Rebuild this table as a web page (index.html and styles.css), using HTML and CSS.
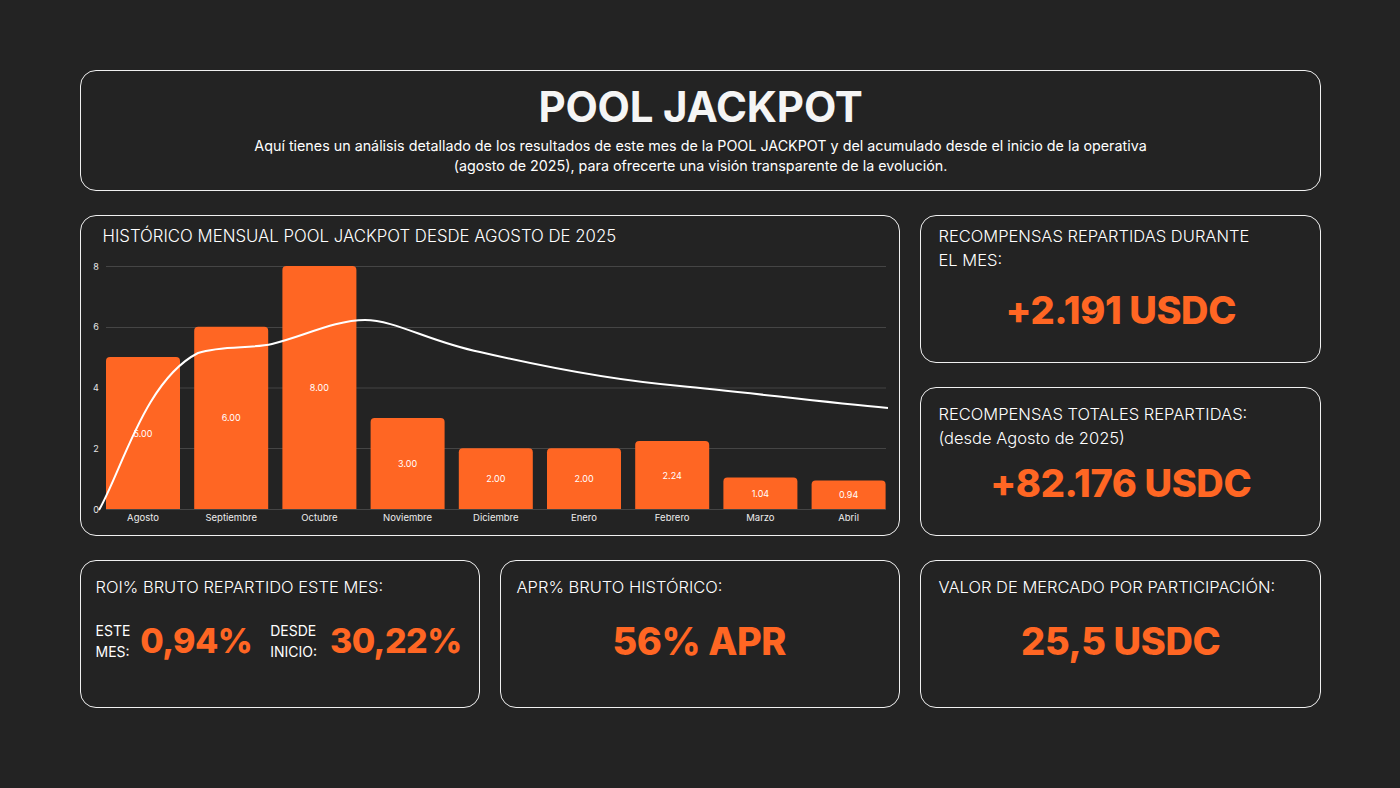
FILE: index.html
```html
<!DOCTYPE html>
<html lang="es">
<head>
<meta charset="utf-8">
<title>POOL JACKPOT</title>
<link rel="stylesheet" href="styles.css">
</head>
<body>
<main class="page">
  <header class="card header">
    <h1 class="header-title">POOL JACKPOT</h1>
    <p class="header-sub">Aquí tienes un análisis detallado de los resultados de este mes de la POOL JACKPOT y del acumulado desde el inicio de la operativa<br>(agosto de 2025), para ofrecerte una visión transparente de la evolución.</p>
  </header>

  <section class="card chart-card">
    <h2 class="chart-title">HISTÓRICO MENSUAL POOL JACKPOT DESDE AGOSTO DE 2025</h2>
    <svg class="chart" viewBox="88 252 804 280" width="804" height="280" xmlns="http://www.w3.org/2000/svg">
      <defs>
        <clipPath id="base"><rect x="88" y="252" width="804" height="257"/></clipPath>
      </defs>
      <g stroke="#454545" stroke-width="1">
        <line x1="106" y1="266.5" x2="886" y2="266.5"/>
        <line x1="106" y1="327.5" x2="886" y2="327.5"/>
        <line x1="106" y1="388" x2="886" y2="388"/>
        <line x1="106" y1="448.5" x2="886" y2="448.5"/>
        <line x1="106" y1="509.5" x2="886" y2="509.5"/>
      </g>
      <g class="axis" text-anchor="middle">
        <text x="96" y="269.5">8</text>
        <text x="96" y="330">6</text>
        <text x="96" y="391">4</text>
        <text x="96" y="451.5">2</text>
        <text x="96" y="512.5">0</text>
      </g>
      <g fill="#ff6623" clip-path="url(#base)">
        <rect x="106" y="357.1" width="74" height="160" rx="4"/>
        <rect x="194.2" y="326.8" width="74" height="190" rx="4"/>
        <rect x="282.4" y="266" width="74" height="250" rx="4"/>
        <rect x="370.6" y="417.9" width="74" height="100" rx="4"/>
        <rect x="458.8" y="448.3" width="74" height="70" rx="4"/>
        <rect x="547" y="448.3" width="74" height="70" rx="4"/>
        <rect x="635.2" y="441" width="74" height="75" rx="4"/>
        <rect x="723.4" y="477.4" width="74" height="40" rx="4"/>
        <rect x="811.6" y="480.5" width="74" height="40" rx="4"/>
      </g>
      <g class="vals" text-anchor="middle">
        <text x="143" y="436.5">5.00</text>
        <text x="231.2" y="421.3">6.00</text>
        <text x="319.4" y="391">8.00</text>
        <text x="407.6" y="466.9">3.00</text>
        <text x="495.8" y="482.1">2.00</text>
        <text x="584" y="482.1">2.00</text>
        <text x="672.2" y="478.5">2.24</text>
        <text x="760.4" y="496.6">1.04</text>
        <text x="848.6" y="498">0.94</text>
      </g>
      <path d="M99,510 C122,470 145,380 198,353 C222,345 250,349 272,344 C302,337 335,320 365,320 C395,320 430,342 480,352 C540,366 610,380 680,386 C745,392 820,402 888,408" fill="none" stroke="#ffffff" stroke-width="2"/>
      <g class="months" text-anchor="middle">
        <text x="143" y="521">Agosto</text>
        <text x="231.2" y="521">Septiembre</text>
        <text x="319.4" y="521">Octubre</text>
        <text x="407.6" y="521">Noviembre</text>
        <text x="495.8" y="521">Diciembre</text>
        <text x="584" y="521">Enero</text>
        <text x="672.2" y="521">Febrero</text>
        <text x="760.4" y="521">Marzo</text>
        <text x="848.6" y="521">Abril</text>
      </g>
    </svg>
  </section>

  <section class="card stat stat-month">
    <h2 class="stat-title">RECOMPENSAS REPARTIDAS DURANTE<br>EL MES:</h2>
    <p class="stat-value">+2.191 USDC</p>
  </section>

  <section class="card stat stat-total">
    <h2 class="stat-title">RECOMPENSAS TOTALES REPARTIDAS:<br>(desde Agosto de 2025)</h2>
    <p class="stat-value">+82.176 USDC</p>
  </section>

  <section class="card stat stat-bottom stat-roi">
    <h2 class="stat-title">ROI% BRUTO REPARTIDO ESTE MES:</h2>
    <div class="roi-row">
      <span class="roi-label">ESTE<br>MES:</span>
      <span class="roi-value">0,94%</span>
      <span class="roi-label roi-label-2">DESDE<br>INICIO:</span>
      <span class="roi-value roi-value-2">30,22%</span>
    </div>
  </section>

  <section class="card stat stat-bottom stat-apr">
    <h2 class="stat-title">APR% BRUTO HISTÓRICO:</h2>
    <p class="stat-value bottom-value">56% APR</p>
  </section>

  <section class="card stat stat-bottom">
    <h2 class="stat-title">VALOR DE MERCADO POR PARTICIPACIÓN:</h2>
    <p class="stat-value bottom-value">25,5 USDC</p>
  </section>
</main>
</body>
</html>
```

FILE: styles.css
```css
html, body {
  margin: 0;
  background: #232323;
}

body {
  font-family: Inter, "Open Sans", "Noto Sans", sans-serif;
  color: #ffffff;
}

.page {
  display: grid;
  grid-template-columns: 400px 400px 401px;
  grid-template-rows: 121px 148px 149px 148px;
  column-gap: 20px;
  row-gap: 24px;
  padding: 70px 0 0 80px;
}

.card {
  box-sizing: border-box;
  border: 1.5px solid #f0f0f0;
  border-radius: 16px;
  margin: 0;
}

/* Header */
.header {
  grid-column: 1 / -1;
  text-align: center;
  padding-top: 11px;
}

.header-title {
  margin: 0;
  font-size: 42px;
  line-height: 50px;
  font-weight: 700;
  letter-spacing: -0.2px;
  color: #f5f5f5;
}

.header-sub {
  margin: 4px 0 0;
  font-size: 14.3px;
  line-height: 19.5px;
  font-weight: 400;
  color: #ffffff;
}

/* Chart */
.chart-card {
  grid-column: 1 / 3;
  grid-row: 2 / 4;
  padding: 8px 0 0;
}

.chart-title {
  margin: 0 0 0 21.5px;
  font-size: 16.8px;
  line-height: 24px;
  font-weight: 300;
  color: #ffffff;
}

.chart {
  display: block;
  margin: 3.5px 0 0 6.5px;
}

.chart .axis text {
  font-size: 9px;
  fill: #e6e6e6;
}

.chart .vals text {
  font-size: 9px;
  fill: #ffffff;
}

.chart .months text {
  font-size: 9.5px;
  fill: #ededed;
}

/* Stat cards */
.stat {
  padding: 8px 17px 0 17.5px;
}

.stat-total {
  padding-top: 13.5px;
}

.stat-bottom {
  padding-top: 14px;
}

.stat-roi {
  padding-left: 14.5px;
}

.stat-apr {
  padding-left: 15.5px;
}

.stat-title {
  margin: 0;
  font-size: 16.5px;
  line-height: 24px;
  font-weight: 300;
  color: #ffffff;
}

.stat-value {
  margin: 15px 0 0;
  text-align: center;
  font-size: 38px;
  line-height: 46px;
  font-weight: 800;
  color: #ff6623;
  letter-spacing: -0.4px;
}

.stat-total .stat-value {
  margin-top: 10px;
}

.bottom-value {
  margin-top: 19px;
}

.roi-row {
  display: flex;
  align-items: center;
  margin-top: 20px;
}

.roi-label {
  font-size: 14px;
  line-height: 21px;
  font-weight: 400;
  color: #ffffff;
}

.roi-value {
  margin-left: 10px;
  font-size: 34px;
  line-height: 44px;
  font-weight: 800;
  color: #ff6623;
  letter-spacing: -0.6px;
}

.roi-label-2 {
  margin-left: 18px;
}

.roi-value-2 {
  margin-left: 13px;
}
```
